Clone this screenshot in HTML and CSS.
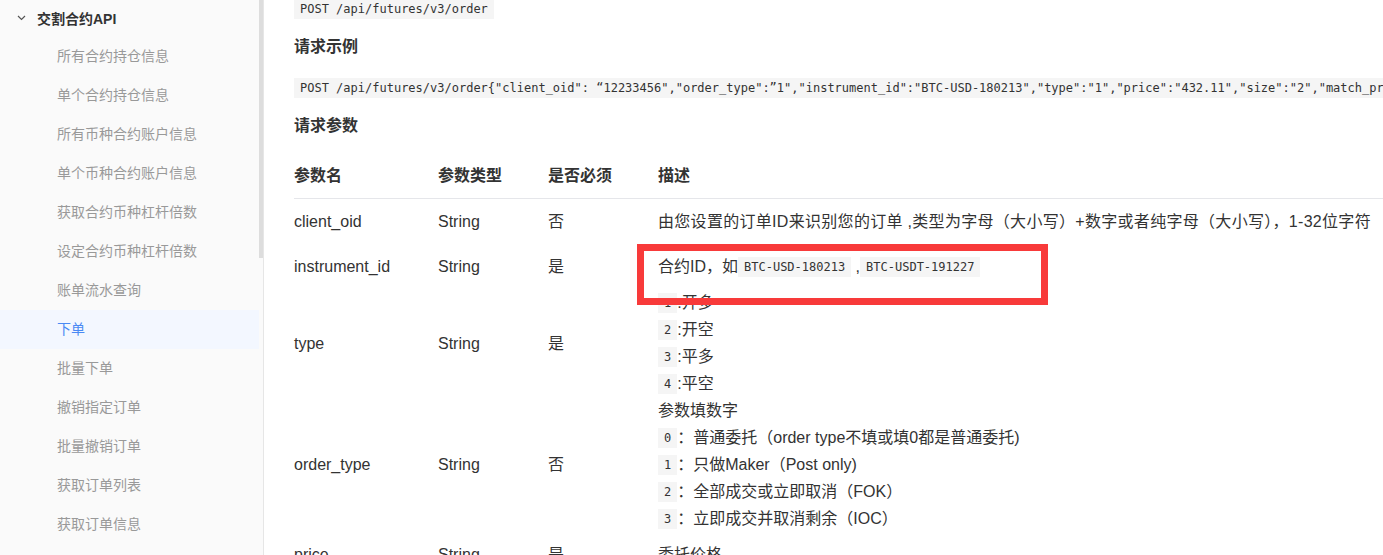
FILE: index.html
```html
<!DOCTYPE html>
<html lang="zh-CN">
<head>
<meta charset="utf-8">
<title>下单 - 交割合约API</title>
<link rel="stylesheet" href="styles.css">
</head>
<body>
<div class="page">
  <aside class="sidebar">
    <nav class="menu">
      <div class="menu-group">
        <svg class="caret" width="9" height="6" viewBox="0 0 9 6"><path d="M1 1 L4.5 4.5 L8 1" fill="none" stroke="#555" stroke-width="1.2"/></svg>
        <span class="menu-group-title">交割合约API</span>
      </div>
      <ul class="menu-list">
        <li class="menu-item">所有合约持仓信息</li>
        <li class="menu-item">单个合约持仓信息</li>
        <li class="menu-item">所有币种合约账户信息</li>
        <li class="menu-item">单个币种合约账户信息</li>
        <li class="menu-item">获取合约币种杠杆倍数</li>
        <li class="menu-item">设定合约币种杠杆倍数</li>
        <li class="menu-item">账单流水查询</li>
        <li class="menu-item active">下单</li>
        <li class="menu-item">批量下单</li>
        <li class="menu-item">撤销指定订单</li>
        <li class="menu-item">批量撤销订单</li>
        <li class="menu-item">获取订单列表</li>
        <li class="menu-item">获取订单信息</li>
        <li class="menu-item">获取成交明细</li>
      </ul>
    </nav>
    <div class="scroll-track"><div class="scroll-thumb"></div></div>
  </aside>

  <main class="content">
    <div class="endpoint"><code class="code-inline">POST /api/futures/v3/order</code></div>
    <h3 class="section-title first">请求示例</h3>
    <pre class="code-block">POST /api/futures/v3/order{"client_oid": “12233456","order_type":”1","instrument_id":"BTC-USD-180213","type":"1","price":"432.11","size":"2","match_price":"0","leverage":"10"}</pre>
    <h3 class="section-title second">请求参数</h3>
    <table class="params">
      <colgroup>
        <col class="col-name">
        <col class="col-type">
        <col class="col-req">
        <col class="col-desc">
      </colgroup>
      <thead>
        <tr>
          <th>参数名</th>
          <th>参数类型</th>
          <th>是否必须</th>
          <th>描述</th>
        </tr>
      </thead>
      <tbody>
        <tr>
          <td>client_oid</td>
          <td>String</td>
          <td>否</td>
          <td class="desc wide">由您设置的订单ID来识别您的订单 ,类型为字母（大小写）+数字或者纯字母（大小写），1-32位字符</td>
        </tr>
        <tr>
          <td>instrument_id</td>
          <td>String</td>
          <td>是</td>
          <td class="desc">合约ID，如<code class="chip">BTC-USD-180213</code> ,<code class="chip">BTC-USDT-191227</code></td>
        </tr>
        <tr>
          <td>type</td>
          <td>String</td>
          <td>是</td>
          <td class="desc multi">
            <div class="line"><code class="chip">1</code>:开多</div>
            <div class="line"><code class="chip">2</code>:开空</div>
            <div class="line"><code class="chip">3</code>:平多</div>
            <div class="line"><code class="chip">4</code>:平空</div>
          </td>
        </tr>
        <tr>
          <td>order_type</td>
          <td>String</td>
          <td>否</td>
          <td class="desc multi">
            <div class="line">参数填数字</div>
            <div class="line"><code class="chip">0</code>：普通委托（order type不填或填0都是普通委托)</div>
            <div class="line"><code class="chip">1</code>：只做Maker（Post only)</div>
            <div class="line"><code class="chip">2</code>：全部成交或立即取消（FOK）</div>
            <div class="line"><code class="chip">3</code>：立即成交并取消剩余（IOC）</div>
          </td>
        </tr>
        <tr>
          <td>price</td>
          <td>String</td>
          <td>是</td>
          <td class="desc">委托价格</td>
        </tr>
      </tbody>
    </table>
  </main>

  <div class="annotation"></div>
</div>
</body>
</html>
```

FILE: styles.css
```css
* {
  box-sizing: border-box;
}

html, body {
  margin: 0;
  padding: 0;
  height: 555px;
  overflow: hidden;
  background: #ffffff;
}

body {
  font-family: "Liberation Sans", "Noto Sans CJK SC", Arial, sans-serif;
  color: #333333;
}

.page {
  position: relative;
  display: flex;
  height: 555px;
  overflow: hidden;
}

/* ---------- Sidebar ---------- */
.sidebar {
  flex: 0 0 264px;
  display: flex;
  height: 555px;
  background: #fafafa;
  border-right: 1px solid #e6e6e6;
  overflow: hidden;
}

.menu {
  flex: 0 0 259px;
  margin-top: -2px;
}

.menu-group {
  display: flex;
  align-items: center;
  height: 39px;
  padding-left: 17px;
}

.caret {
  display: block;
  margin-right: 11px;
}

.menu-group-title {
  font-size: 14px;
  font-weight: bold;
  color: #333333;
}

.menu-list {
  list-style: none;
  margin: 0;
  padding: 0;
}

.menu-item {
  height: 39px;
  line-height: 39px;
  padding-left: 57px;
  font-size: 14px;
  color: #999999;
  white-space: nowrap;
}

.menu-item.active {
  background: #f3f7ff;
  color: #4a8af4;
}

.scroll-track {
  flex: 0 0 4px;
}

.scroll-thumb {
  width: 4px;
  height: 258px;
  background: #dddddd;
}

/* ---------- Content ---------- */
.content {
  flex: 1 1 auto;
  min-width: 0;
  padding-left: 30px;
  overflow: hidden;
}

.endpoint {
  height: 20px;
  margin-top: -1px;
}

.code-inline {
  display: inline-block;
  height: 20px;
  line-height: 20px;
  padding: 0 6px;
  background: #f5f5f5;
  font-family: "DejaVu Sans Mono", "Liberation Mono", monospace;
  font-size: 12px;
  color: #333333;
}

.section-title {
  margin: 0;
  font-size: 16px;
  line-height: 24px;
  font-weight: bold;
  color: #333333;
}

.section-title.first {
  margin-top: 16px;
}

.section-title.second {
  margin-top: 16px;
}

.code-block {
  margin: 19px 0 0 0;
  height: 20px;
  line-height: 20px;
  padding: 0 6px;
  background: #f5f5f5;
  font-family: "DejaVu Sans Mono", "Liberation Mono", monospace;
  font-size: 12px;
  color: #333333;
  white-space: pre;
  overflow: hidden;
}

.params {
  margin-top: 15px;
  border-collapse: collapse;
  table-layout: fixed;
  width: 1124px;
  font-size: 16px;
  line-height: 27px;
  white-space: nowrap;
}

.col-name { width: 144px; }
.col-type { width: 110px; }
.col-req  { width: 110px; }
.col-desc { width: 760px; }

.params th {
  text-align: left;
  font-weight: bold;
  padding: 9px 0;
  border-bottom: 1px solid #e5e6ea;
  color: #333333;
}

.params td {
  padding: 9px 0;
  vertical-align: middle;
  color: #333333;
}

.params td.multi {
  padding: 0;
}

.params td.wide {
  letter-spacing: 0.3px;
}

.line {
  height: 27px;
  line-height: 27px;
}

.chip {
  display: inline-block;
  height: 20px;
  line-height: 20px;
  padding: 0 6px;
  background: #f5f5f5;
  font-family: "DejaVu Sans Mono", "Liberation Mono", monospace;
  font-size: 12px;
  color: #333333;
  vertical-align: 1px;
}

/* ---------- Annotation overlay ---------- */
.annotation {
  position: absolute;
  left: 637px;
  top: 244px;
  width: 411px;
  height: 61px;
  border: 7px solid #f83a3a;
  pointer-events: none;
}
```
